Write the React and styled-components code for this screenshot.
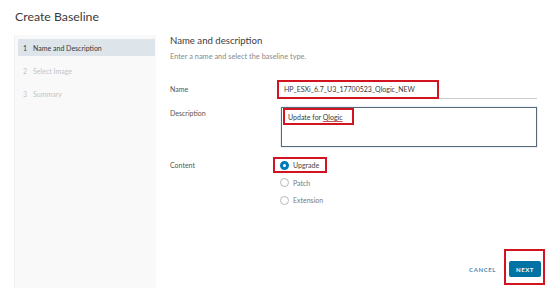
import React from "react";
import styled, { createGlobalStyle } from "styled-components";

const Global = createGlobalStyle`
  html, body { margin: 0; padding: 0; background: #fff; }
  body { font-family: Lato, "Open Sans", sans-serif; color: #565656; }
  * { box-sizing: border-box; }
`;

const Page = styled.div`
  width: 552px;
  height: 295px;
  display: flex;
  flex-direction: column;
  background: #fff;
  overflow: hidden;
`;

const Header = styled.div`
  height: 35px;
  flex-shrink: 0;
  display: flex;
  align-items: center;
  padding: 0 0 2px 15px;
  font-size: 12.3px;
  color: #3a3a3a;
`;

const Body = styled.div`
  flex: 1;
  display: flex;
  padding-bottom: 7px;
`;

const Sidebar = styled.div`
  width: 142px;
  margin-left: 14px;
  background: #f9f9f9;
  border-left: 1px solid #f0f0f0;
  padding: 4px 1px 0 3px;
  display: flex;
  flex-direction: column;
  gap: 6px;
`;

const Step = styled.div`
  height: 17px;
  display: flex;
  align-items: center;
  gap: 6px;
  padding-left: 5px;
  font-size: 7px;
  color: ${(p) => (p.active ? "#3a3a3a" : "#c4c4c4")};
  background: ${(p) => (p.active ? "#dde4ea" : "transparent")};
`;

const Main = styled.div`
  flex: 1;
  display: flex;
  flex-direction: column;
  padding: 0 15px 0 14px;
`;

const Heading = styled.div`
  font-size: 9.6px;
  color: #3d3d3d;
  line-height: 12px;
`;

const Sub = styled.div`
  margin-top: 5px;
  font-size: 7.4px;
  color: #8a8a8a;
  line-height: 10px;
`;

const Form = styled.div`
  margin-top: 18px;
  display: grid;
  grid-template-columns: 107px 1fr;
  row-gap: 8px;
  font-size: 7px;
`;

const Label = styled.div`
  color: #565656;
  padding-top: ${(p) => p.pt || 0}px;
`;

const NameField = styled.div`
  position: relative;
  height: 19px;
  border-bottom: 1px solid #cfcfcf;
  display: flex;
  align-items: center;
  padding: 0 0 1px 7px;
  font-size: 7px;
  color: #3a3a3a;
`;

const Highlight = styled.div`
  position: absolute;
  border: 2px solid #d21421;
  left: ${(p) => p.l}px;
  top: ${(p) => p.t}px;
  width: ${(p) => p.w}px;
  height: ${(p) => p.h}px;
  pointer-events: none;
`;

const TextArea = styled.div`
  position: relative;
  margin-left: 4px;
  height: 40px;
  border: 1px solid #55697a;
  box-shadow: 0 0 1px #8aa6bd;
  padding: 5px 0 0 6px;
  color: #3a3a3a;
`;

const Misspelled = styled.span`
  text-decoration: underline;
  text-decoration-color: #c65a5a;
`;

const Radios = styled.div`
  position: relative;
  display: flex;
  flex-direction: column;
  gap: 7.5px;
  padding-left: 3px;
  margin-top: 5px;
`;

const RadioRow = styled.div`
  display: flex;
  align-items: center;
  gap: 4px;
  height: 10px;
  color: ${(p) => (p.checked ? "#454545" : "#7a7a7a")};
`;

const Dot = styled.span`
  width: 9px;
  height: 9px;
  border-radius: 50%;
  border: ${(p) => (p.checked ? "3px solid #0079b8" : "1px solid #b8b8b8")};
  background: #fff;
`;

const Footer = styled.div`
  margin-top: auto;
  margin-right: -4px;
  display: flex;
  justify-content: flex-end;
  align-items: center;
  gap: 13px;
  padding-bottom: 11px;
`;

const CancelBtn = styled.div`
  font-size: 6px;
  font-weight: 700;
  letter-spacing: 0.6px;
  color: #4f8ab8;
`;

const NextWrap = styled.div`
  position: relative;
`;

const NextBtn = styled.div`
  width: 32px;
  height: 16px;
  background: #0072a3;
  border-radius: 2px;
  color: #fff;
  font-size: 6px;
  font-weight: 700;
  letter-spacing: 0.6px;
  display: flex;
  align-items: center;
  justify-content: center;
`;

export default function App() {
  return (
    <Page>
      <Global />
      <Header>Create Baseline</Header>
      <Body>
        <Sidebar>
          <Step active>
            <span>1</span>
            <span>Name and Description</span>
          </Step>
          <Step>
            <span>2</span>
            <span>Select Image</span>
          </Step>
          <Step>
            <span>3</span>
            <span>Summary</span>
          </Step>
        </Sidebar>
        <Main>
          <Heading>Name and description</Heading>
          <Sub>Enter a name and select the baseline type.</Sub>
          <Form>
            <Label pt={5}>Name</Label>
            <NameField>
              HP_ESXi_6.7_U3_17700523_Qlogic_NEW
              <Highlight l={0} t={0} w={162} h={19} />
            </NameField>
            <Label pt={2}>Description</Label>
            <TextArea>
              Update for <Misspelled>Qlogic</Misspelled>
              <Highlight l={1} t={0} w={71} h={17} />
            </TextArea>
            <Label pt={6}>Content</Label>
            <Radios>
              <RadioRow checked>
                <Dot checked />
                Upgrade
              </RadioRow>
              <RadioRow>
                <Dot />
                Patch
              </RadioRow>
              <RadioRow>
                <Dot />
                Extension
              </RadioRow>
              <Highlight l={-4} t={-3} w={54} h={16} />
            </Radios>
          </Form>
          <Footer>
            <CancelBtn>CANCEL</CancelBtn>
            <NextWrap>
              <NextBtn>NEXT</NextBtn>
              <Highlight l={-5} t={-12} w={41} h={36} />
            </NextWrap>
          </Footer>
        </Main>
      </Body>
    </Page>
  );
}
